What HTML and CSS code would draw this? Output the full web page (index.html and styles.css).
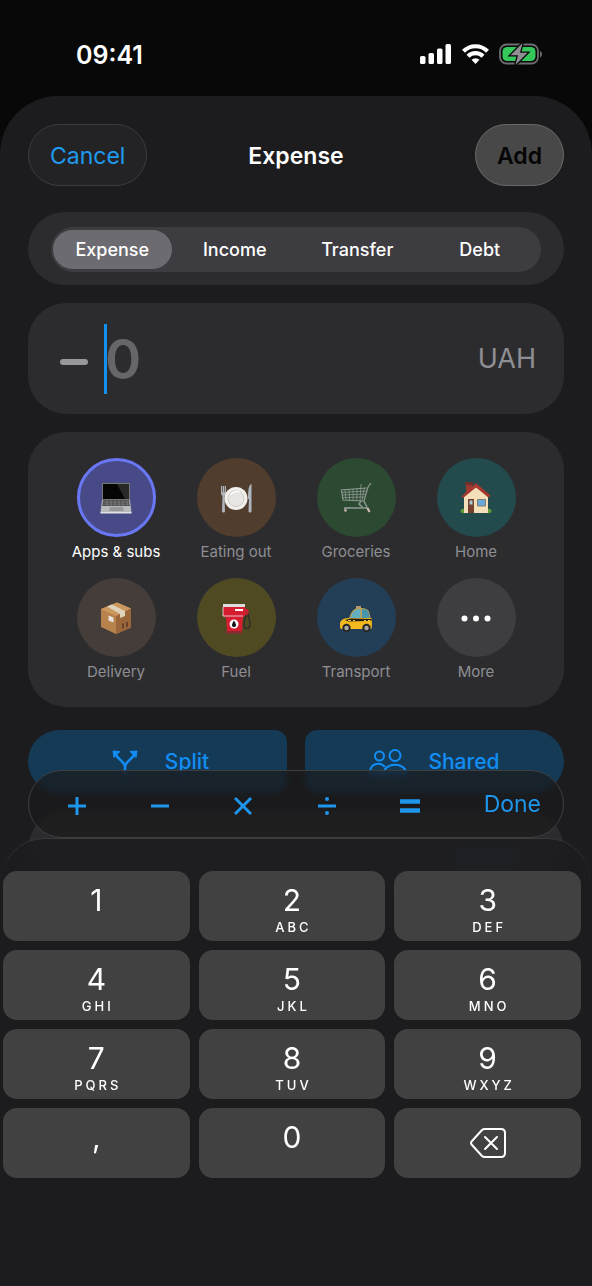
FILE: index.html
```
<!DOCTYPE html>
<html lang="en">
<head>
    <meta charset="UTF-8">
    <meta name="viewport" content="width=device-width, initial-scale=1.0">
    <title>Expense</title>
    <link rel="stylesheet" href="styles.css">
</head>
<body>
    <div class="status-bar">
        <span class="time">09:41</span>
        <div class="status-icons">
            <svg width="32" height="20" viewBox="0 0 32 20" fill="#fff">
                <rect x="0" y="12" width="5.5" height="8" rx="1.6"/>
                <rect x="8.5" y="9" width="5.5" height="11" rx="1.6"/>
                <rect x="17" y="4.5" width="5.5" height="15.5" rx="1.6"/>
                <rect x="25.5" y="0" width="5.5" height="20" rx="1.6"/>
            </svg>
            <svg width="27" height="20" viewBox="0 0 27 20" fill="none" stroke="#fff" stroke-width="4.2">
                <path d="M1.500 7.200a17 17 0 0 1 24 0"/>
                <path d="M6 12.200a10.600 10.600 0 0 1 15 0"/>
                <path d="M13.500 20l-4-4.200a6 6 0 0 1 8 0z" fill="#fff" stroke="none"/>
            </svg>
            <svg width="44" height="22" viewBox="0 0 44 22">
                <rect x="1" y="1.500" width="38" height="19" rx="6.500" fill="none" stroke="#6d6d70" stroke-width="1.800"/>
                <path d="M41 8c2.600.8 2.600 5.600 0 6.400z" fill="#6d6d70"/>
                <rect x="3.500" y="4" width="33" height="14" rx="4.500" fill="#34c759"/>
                <path d="M23.500 0L11.500 12.200h7.500L16.500 22 28.500 9.800h-7.500z" fill="#8e8e93" stroke="#080808" stroke-width="2.600" paint-order="stroke"/>
            </svg>
        </div>
    </div>

    <main class="sheet">
        <header class="header">
            <button class="pill cancel">Cancel</button>
            <h1>Expense</h1>
            <button class="pill add">Add</button>
        </header>

        <div class="card type-card">
            <div class="segments">
                <input type="radio" name="type" id="type-expense" checked>
                <label for="type-expense">Expense</label>
                <input type="radio" name="type" id="type-income">
                <label for="type-income">Income</label>
                <input type="radio" name="type" id="type-transfer">
                <label for="type-transfer">Transfer</label>
                <input type="radio" name="type" id="type-debt">
                <label for="type-debt">Debt</label>
            </div>
        </div>

        <div class="card amount-card">
            <span class="minus"></span>
            <span class="caret"></span>
            <input class="amount" type="text" inputmode="decimal" placeholder="0" aria-label="Amount">
            <span class="currency">UAH</span>
        </div>

        <div class="card categories">
            <button class="category selected">
                <span class="circle indigo">
                    <svg width="32" height="32" viewBox="0 0 32 32">
                        <path d="M2 1h28v18H2z" fill="#777"/>
                        <path d="M3 2h26v15H3z" fill="#050505"/>
                        <path d="M17 2h12v15h-4z" fill="#292929"/>
                        <path d="M2 18h28l1.500 12.500H.5z" fill="#b9babb"/>
                        <path d="M3 18h26l.8 6H2.200z" fill="#4d4d4d"/>
                        <path d="M3 20h26M2.500 22.200h27M7 18v6M11 18v6M15 18v6M19 18v6M23 18v6M27 18v6" stroke="#a5a5a5" stroke-width=".4"/>
                        <path d="M10 25h13l1 4H9z" fill="#979899"/>
                        <path d="M.5 30h31v1.500H.5z" fill="#e2e2e2"/>
                    </svg>
                </span>
                Apps &amp; subs
            </button>
            <button class="category">
                <span class="circle brown">
                    <svg width="32" height="32" viewBox="0 0 32 32">
                        <path d="M1 4v7c0 2 1 2.500 1.500 3L2 29c0 2 3 2 3 0l-.5-15c1.500-1 1.500-2 1.500-3V4" fill="#aeb4b9"/>
                        <path d="M2.500 4v6M4.500 4v6" stroke="#50402f" stroke-width=".7"/>
                        <path d="M31.500 2c-3 1-3.500 7-3.500 15h1l-.5 12c0 2 3 2 3 0z" fill="#aeb7bf"/>
                        <circle cx="16" cy="16.500" r="11.500" fill="#f1f0ed"/>
                        <circle cx="16" cy="16.500" r="8" fill="#e7e6e2" stroke="#cfccc7"/>
                        <path d="M10.500 13a7 7 0 0 1 9-3" fill="none" stroke="#fff" stroke-width="1.500"/>
                    </svg>
                </span>
                Eating out
            </button>
            <button class="category">
                <span class="circle green">
                    <svg width="32" height="32" viewBox="0 0 32 32" fill="none" stroke="#8f9b92">
                        <path d="M31 1l-3 4-4 14L3 18 1.500 8l25-2" stroke-width="1.200"/>
                        <path d="M2 10.500l24-1.500M2.500 13l23-1M3 15.500l21.500-.5M5 8l1 10M9 7.500l.5 10.500M13 7l.2 11M17 6.500l-.3 11.500M21 2l-1 16.500M24.500 5.500L22 18.500" stroke-width=".8"/>
                        <path d="M21 19l-2 3 3.500 3M24 19l3 6.500M28 26H4M4 27l6-1.500" stroke-width="1.400"/>
                        <path d="M5 27.500l1 2M27.500 26l2 4" stroke="#d0b9aa" stroke-width="2.200"/>
                    </svg>
                </span>
                Groceries
            </button>
            <button class="category">
                <span class="circle teal">
                    <svg width="32" height="32" viewBox="0 0 32 32">
                        <ellipse cx="4" cy="29" rx="3.500" ry="2.200" fill="#5c9b35"/>
                        <ellipse cx="28" cy="29" rx="3.500" ry="2.200" fill="#5c9b35"/>
                        <path d="M6 1h6v9H6z" fill="#9b3830"/>
                        <path d="M5 0h8v3H5z" fill="#713029"/>
                        <path d="M4 15L16.500 4 28 15v16H4z" fill="#f3dfb9"/>
                        <path d="M1.500 14.500L16 1l14.500 12.500-2 2L16 5.500 3 16z" fill="#a8382f"/>
                        <path d="M8 17h6v14H8z" fill="#75412f"/>
                        <path d="M9.500 18.500h3v4h-3z" fill="#a9cbda"/>
                        <path d="M17.500 17.500h8v6.500h-8z" fill="#66a9da" stroke="#857a6c"/>
                    </svg>
                </span>
                Home
            </button>
            <button class="category">
                <span class="circle taupe">
                    <svg width="32" height="32" viewBox="0 0 32 32">
                        <path d="M1 7L17 .5 31 6.500v19L16 32 1 25z" fill="#b7824c"/>
                        <path d="M1 7L17 .5l14 6L16 14z" fill="#cb985f"/>
                        <path d="M16 14l15-7.500v19L16 32z" fill="#9b673a"/>
                        <path d="M7 4.500L20 12v4l5-2V9L12 2.500z" fill="#dfd2ba"/>
                        <path d="M8.500 13.500l5 2v5l-5-2z" fill="#e6e3df"/>
                        <path d="M22 22l2-1v5l-2 1zM26 20.500l2-1v5l-2 1z" fill="#69412a"/>
                    </svg>
                </span>
                Delivery
            </button>
            <button class="category">
                <span class="circle olive">
                    <svg width="32" height="32" viewBox="0 0 32 32">
                        <path d="M27 10c0 4-3 7-3 12 0 6 6 6 6 0 0-4-2-6-2-11" fill="none" stroke="#302d29" stroke-width="1.500"/>
                        <path d="M23 6l5 1 1 4-3 3-2-4z" fill="#bd2430"/>
                        <path d="M3 3h22v11l-2 1-1 15H7L6 16l-3-2z" fill="#d51d2f"/>
                        <path d="M3 2h22v3H3z" fill="#ddd"/>
                        <path d="M3 5v9h20" fill="none" stroke="#eee" stroke-width=".8"/>
                        <path d="M15 7h8v2h-8z" fill="#fff"/>
                        <circle cx="14" cy="22" r="4.500" fill="#fff"/>
                        <path d="M14 18.500c-4 6-1 6.500 0 6.500s4-.5 0-6.500z" fill="#151515"/>
                        <path d="M6 29h16v2.500H6z" fill="#8c2932"/>
                    </svg>
                </span>
                Fuel
            </button>
            <button class="category">
                <span class="circle navy">
                    <svg width="32" height="32" viewBox="0 0 32 32">
                        <path d="M16 4h5v3h-5z" fill="#b5956c"/>
                        <path d="M9 17C11 9 14 6 20 6c8 0 10 2 10.500 12z" fill="#c5a04a"/>
                        <path d="M10.500 16.500c1.500-7 4-9.500 10-9.500v9.500z" fill="#63b0c2"/>
                        <path d="M22 7c6 0 7 2 7.500 9.500H22z" fill="#4796ab"/>
                        <path d="M0 21c1-4 5-5 10-5h21.500c.5 3 .5 8 0 11H1c-1-1-1.500-3-1-6z" fill="#f4b91e"/>
                        <path d="M5 18l6-1.500 20.500.5v1.500l-5 .5-18 .5z" fill="#211e1a"/>
                        <path d="M8 18.500h3m2 0h2m9 0h2m2 0h2" stroke="#f4c73c"/>
                        <circle cx="6.500" cy="26" r="4.200" fill="#272727"/>
                        <circle cx="6.500" cy="26" r="2.200" fill="#aaa"/>
                        <circle cx="26.500" cy="26" r="4.200" fill="#272727"/>
                        <circle cx="26.500" cy="26" r="2.200" fill="#aaa"/>
                    </svg>
                </span>
                Transport
            </button>
            <button class="category">
                <span class="circle gray">
                    <svg width="32" height="32" viewBox="0 0 32 32" fill="#fff">
                        <circle cx="4.500" cy="16.500" r="3"/>
                        <circle cx="16" cy="16.500" r="3"/>
                        <circle cx="27.500" cy="16.500" r="3"/>
                    </svg>
                </span>
                More
            </button>
        </div>

        <div class="actions">
            <button class="action split">
                <svg width="38" height="26" viewBox="0 0 38 26" fill="none" stroke="#128df5" stroke-width="2.500">
                    <path d="M19 26v-8c0-5-6-7-10-13M19 18c0-5 6-7 10-13"/>
                    <path d="M7 2l7 .5-6 6zM31 2l-7 .5 6 6z" fill="#128df5" stroke-width="1"/>
                </svg>
                Split
            </button>
            <button class="action shared">
                <svg width="38" height="26" viewBox="0 0 38 26" fill="none" stroke="#128df5" stroke-width="2">
                    <circle cx="10.500" cy="7" r="4.500"/>
                    <circle cx="26" cy="6.500" r="5.500"/>
                    <path d="M14 24H1c0-11 11-11 15-6M15 24c0-11 22-11 22 0z"/>
                </svg>
                Shared
            </button>
        </div>

        <div class="card details"><span class="details-value"></span></div>
    </main>

    <div class="input-panel">
        <div class="toolbar">
            <button aria-label="Plus">
                <svg width="20" height="20" viewBox="0 0 20 20"><path d="M10 1v18M1 10h18"/></svg>
            </button>
            <button aria-label="Minus">
                <svg width="20" height="20" viewBox="0 0 20 20"><path d="M1 10h18"/></svg>
            </button>
            <button aria-label="Multiply">
                <svg width="20" height="20" viewBox="0 0 20 20"><path d="M2 2l16 16M18 2L2 18"/></svg>
            </button>
            <button aria-label="Divide">
                <svg width="20" height="20" viewBox="0 0 20 20"><path d="M1 10h18"/><circle cx="10" cy="3" r="2"/><circle cx="10" cy="17" r="2"/></svg>
            </button>
            <button aria-label="Equals">
                <svg width="20" height="20" viewBox="0 0 20 20"><path d="M0 5.500h20M0 14.500h20" stroke-width="4.500"/></svg>
            </button>
            <button class="done">Done</button>
        </div>

        <div class="keyboard">
            <button class="key">1</button>
            <button class="key">2<span>ABC</span></button>
            <button class="key">3<span>DEF</span></button>
            <button class="key">4<span>GHI</span></button>
            <button class="key">5<span>JKL</span></button>
            <button class="key">6<span>MNO</span></button>
            <button class="key">7<span>PQRS</span></button>
            <button class="key">8<span>TUV</span></button>
            <button class="key">9<span>WXYZ</span></button>
            <button class="key">,</button>
            <button class="key">0</button>
            <button class="key backspace" aria-label="Delete">
                <svg width="36" height="30" viewBox="0 0 36 30" fill="none" stroke="#fff" stroke-width="2" stroke-linecap="round" stroke-linejoin="round">
                    <path d="M15 1h16q4 0 4 4v20q0 4-4 4H15q-2 0-3-1L2 17q-2-2 0-4L12 2q1-1 3-1z"/>
                    <path d="M15 9l12 12M27 9L15 21"/>
                </svg>
            </button>
        </div>
    </div>
</body>
</html>
```

FILE: styles.css
```
* { box-sizing: border-box; }
body { font-family: Inter, "Liberation Sans", sans-serif; background-color: #080808; color: white; margin: 0; min-height: 100vh; display: flex; flex-direction: column; }
button { font-family: inherit; border: none; background: none; color: inherit; padding: 0; margin: 0; cursor: pointer; }
svg { display: block; flex: none; }

/* status bar */
.status-bar { display: flex; justify-content: space-between; align-items: center; height: 96px; padding: 24px 49px 12px 76px; }
.time { font-size: 25px; font-weight: 600; line-height: 30px; padding-top: 2px; }
.status-icons { display: flex; align-items: center; gap: 10px; }

/* sheet */
.sheet { flex: 1; background-color: #1c1c1e; border-radius: 58px 58px 0 0; padding: 28px 28px 0; display: flex; flex-direction: column; gap: 18px; }
.header { display: grid; grid-template-columns: 1fr auto 1fr; align-items: center; margin-bottom: 8px; }
.header h1 { font-size: 23px; font-weight: 600; margin: 0; padding-top: 2px; }
.pill { height: 62px; padding: 2px 21px 0; border: 1px solid #3c3c3e; border-radius: 31px; font-size: 23px; }
.cancel { justify-self: start; background-color: #232325; color: #1e9bf0; }
.add { justify-self: end; background-color: #484848; border-color: #686868; color: #050505; font-weight: 600; }
.card { background-color: #2c2c2e; border-radius: 38px; }

.type-card { padding: 15px 23px 13px; }
.segments { display: flex; gap: 4px; padding: 3px 2px; background-color: #3d3c41; border-radius: 23px; }
.segments input { position: absolute; opacity: 0; }
.segments label { flex: 1; text-align: center; font-size: 18px; font-weight: 500; line-height: 39px; border-radius: 20px; cursor: pointer; }
.segments input:checked + label { background-color: #6c6b71; }

.amount-card { display: flex; align-items: center; height: 111px; padding: 0 28px 0 32px; }
.minus { width: 28px; height: 6px; margin-top: 7px; border-radius: 3px; background-color: #98989b; }
.caret { width: 3px; height: 70px; margin: 0 -2px 0 16px; background-color: #1290f0; }
.amount { flex: 1; min-width: 0; height: 70px; padding: 0; border: none; outline: none; background: none; color: white; font-family: inherit; font-size: 55px; font-weight: 600; }
.amount::placeholder { color: #666668; opacity: 1; }
.currency { font-size: 27px; color: #8e8e93; }

/* categories */
.categories { display: grid; grid-template-columns: repeat(4, 1fr); row-gap: 15px; padding: 26px 28px 24px; }
.category { display: flex; flex-direction: column; align-items: center; gap: 4px; font-size: 15px; line-height: 22px; color: #8e8e93; }
.category.selected { color: white; }
.circle { display: flex; align-items: center; justify-content: center; width: 79px; height: 79px; border-radius: 50%; }
.selected .circle { border: 3px solid #6977f3; }
.indigo { background-color: #484987; }
.brown { background-color: #503d2e; }
.green { background-color: #2c4932; }
.teal { background-color: #234a4d; }
.taupe { background-color: #443d3a; }
.olive { background-color: #504a23; }
.navy { background-color: #233f58; }
.gray { background-color: #3e3e40; }

.actions { display: grid; grid-template-columns: 1fr 1fr; gap: 18px; margin-top: 5px; }
.action { display: flex; align-items: center; justify-content: center; gap: 21px; height: 63px; background-color: #153a56; color: #128df5; font-size: 21px; font-weight: 500; }
.split { border-radius: 36px 14px 14px 36px; }
.shared { border-radius: 14px 36px 36px 14px; }
.details { height: 72px; padding: 38px 48px; }
.details-value { display: block; width: 60px; height: 14px; margin-left: auto; background-color: #153a56; }

/* toolbar and keyboard stay over the sheet */
.input-panel { position: fixed; left: 0; right: 0; bottom: 0; }
.toolbar { display: flex; align-items: center; height: 68px; margin: 0 28px; padding: 0 22px 0 6px; border: 1px solid #3e3e40; border-radius: 34px; background-color: rgba(26, 26, 27, 0.7); backdrop-filter: blur(3px); }
.toolbar button { flex: 1; display: flex; justify-content: center; }
.toolbar svg { margin-top: 3px; fill: #1e96ec; stroke: #1e96ec; stroke-width: 3; }
.toolbar circle { stroke: none; }
.toolbar .done { flex: none; padding-left: 32px; font-size: 23px; color: #1e96ec; }
.keyboard { display: grid; grid-template-columns: repeat(3, 1fr); gap: 9px; margin: 0 2px; padding: 32px 9px 108px 1px; border-top: 1px solid #3a3a3c; border-radius: 42px 42px 0 0; background-color: rgba(28, 28, 30, 0.85); backdrop-filter: blur(8px); }
.key { display: flex; flex-direction: column; align-items: center; height: 70px; padding-top: 12px; border-radius: 14px; background-color: #414142; font-size: 30px; line-height: 34px; }
.key span { margin-top: 2px; padding-left: 3px; font-size: 13px; font-weight: 500; line-height: 16px; letter-spacing: 3px; }
.backspace { justify-content: center; padding-top: 0; }
```
